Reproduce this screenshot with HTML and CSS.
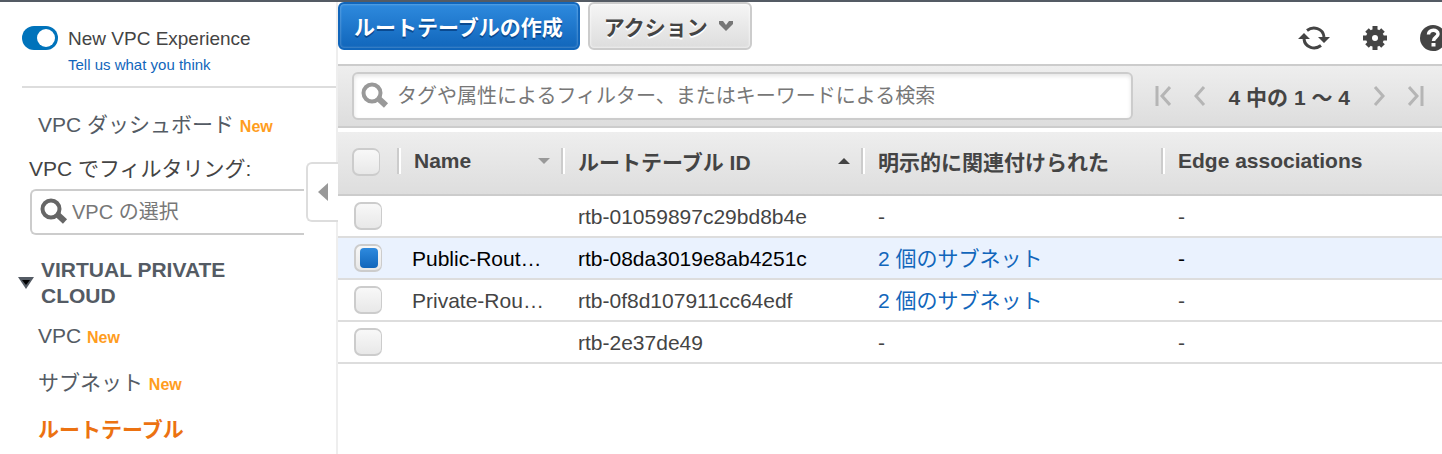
FILE: index.html
```html
<!DOCTYPE html>
<html lang="ja">
<head>
    <meta charset="UTF-8">
    <meta name="viewport" content="width=device-width, initial-scale=1.0">
    <title>ルートテーブル | VPC</title>
    <link rel="stylesheet" href="styles.css">
</head>
<body>
<div class="layout">
    <aside class="sidebar">
        <div class="experience">
            <input type="checkbox" id="newExperience" class="toggle" checked>
            <div class="experience-text">
                <label for="newExperience">New VPC Experience</label>
                <a href="#">Tell us what you think</a>
            </div>
        </div>

        <a href="#" class="nav-item dashboard">VPC ダッシュボード <span class="new">New</span></a>

        <label for="vpcFilter" class="filter-label">VPC でフィルタリング:</label>
        <div class="vpc-filter">
            <svg viewBox="0 0 28 28" width="28" height="28">
                <circle cx="11" cy="11" r="8.5" fill="none" stroke="#666" stroke-width="4"/>
                <path d="M18 17l7 6.5" stroke="#666" stroke-width="6"/>
            </svg>
            <input type="text" id="vpcFilter" placeholder="VPC の選択">
        </div>

        <div class="section">
            <svg viewBox="0 0 16 12" width="16" height="12">
                <path d="M0 0h16L8 12z" fill="#545b64"/>
                <path d="M4 3h8l-4 5z" fill="#000"/>
            </svg>
            <h2>VIRTUAL PRIVATE CLOUD</h2>
        </div>

        <nav>
            <a href="#" class="nav-item">VPC <span class="new">New</span></a>
            <a href="#" class="nav-item">サブネット <span class="new">New</span></a>
            <a href="#" class="nav-item active">ルートテーブル</a>
        </nav>

        <button class="collapse" aria-label="サイドバーを閉じる">
            <svg viewBox="0 0 10 18" width="10" height="18"><path d="M10 0v18L0 9z" fill="#999"/></svg>
        </button>
    </aside>

    <main class="content">
        <div class="actions">
            <button class="btn btn-primary">ルートテーブルの作成</button>
            <button class="btn">アクション
                <svg viewBox="0 0 16 12" width="16" height="12"><path d="M1 1h4l3 4 3-4h4v3l-7 7-7-7z" fill="#777"/></svg>
            </button>
            <div class="tools">
                <button class="tool" aria-label="更新">
                    <svg viewBox="0 0 32 24" width="32" height="28">
                        <g fill="none" stroke="#444" stroke-width="3">
                            <path d="M9 4.5C15 0 25 2 26 11"/>
                            <path d="M23 19.500C17 24 7 22 6 13"/>
                        </g>
                        <path d="M20 11h12l-6 6zM0 13h12L6 7z" fill="#444"/>
                    </svg>
                </button>
                <button class="tool" aria-label="設定">
                    <svg viewBox="0 0 24 24" width="24" height="24">
                        <path d="M12 0v24M0 12h24M4 4l16 16M20 4L4 20" stroke="#444" stroke-width="5"/>
                        <circle cx="12" cy="12" r="9" fill="#444"/>
                        <circle cx="12" cy="12" r="3" fill="#fff"/>
                    </svg>
                </button>
                <button class="tool" aria-label="ヘルプ">
                    <svg viewBox="0 0 26 26" width="26" height="26">
                        <circle cx="13" cy="13" r="13" fill="#444"/>
                        <path d="M8.500 9.500c0-5.500 9.500-5.500 9.500-.5 0 3.500-4.500 3-4.500 7" fill="none" stroke="#fff" stroke-width="3.500"/>
                        <path d="M11.500 18h4v3.500h-4z" fill="#fff"/>
                    </svg>
                </button>
            </div>
        </div>

        <div class="filter-bar">
            <div class="search">
                <svg viewBox="0 0 28 28" width="28" height="28">
                    <circle cx="11" cy="11" r="8.500" fill="none" stroke="#999" stroke-width="4"/>
                    <path d="M18 17l7 6.500" stroke="#999" stroke-width="6"/>
                </svg>
                <input type="text" aria-label="フィルター" placeholder="タグや属性によるフィルター、またはキーワードによる検索">
            </div>
            <div class="pager">
                <button aria-label="最初"><svg viewBox="0 0 16 22" width="16" height="22"><path d="M2 1v20M15 2L7 11l8 9"/></svg></button>
                <button aria-label="前へ"><svg viewBox="0 0 12 22" width="12" height="22"><path d="M10 2L2 11l8 9"/></svg></button>
                <span>4 中の 1 〜 4</span>
                <button aria-label="次へ"><svg viewBox="0 0 12 22" width="12" height="22"><path d="M2 2l8 9-8 9"/></svg></button>
                <button aria-label="最後"><svg viewBox="0 0 16 22" width="16" height="22"><path d="M14 1v20M1 2l8 9-8 9"/></svg></button>
            </div>
        </div>

        <table>
            <colgroup>
                <col class="col-check">
                <col class="col-name">
                <col class="col-id">
                <col class="col-subnet">
                <col>
            </colgroup>
            <thead>
                <tr>
                    <th><input type="checkbox" class="check" aria-label="すべて選択"></th>
                    <th><div class="head">Name <svg viewBox="0 0 12 6" width="12" height="6"><path d="M0 0h12L6 6z" fill="#999"/></svg></div></th>
                    <th><div class="head">ルートテーブル ID <svg viewBox="0 0 12 6" width="12" height="6"><path d="M0 6h12L6 0z" fill="#444"/></svg></div></th>
                    <th><div class="head">明示的に関連付けられた</div></th>
                    <th><div class="head">Edge associations</div></th>
                </tr>
            </thead>
            <tbody>
                <tr>
                    <td><input type="checkbox" class="check" aria-label="rtb-01059897c29bd8b4e"></td>
                    <td></td>
                    <td>rtb-01059897c29bd8b4e</td>
                    <td>-</td>
                    <td>-</td>
                </tr>
                <tr class="selected">
                    <td><input type="checkbox" class="check" aria-label="rtb-08da3019e8ab4251c" checked></td>
                    <td>Public-Rout…</td>
                    <td>rtb-08da3019e8ab4251c</td>
                    <td><a href="#">2 個のサブネット</a></td>
                    <td>-</td>
                </tr>
                <tr>
                    <td><input type="checkbox" class="check" aria-label="rtb-0f8d107911cc64edf"></td>
                    <td>Private-Rou…</td>
                    <td>rtb-0f8d107911cc64edf</td>
                    <td><a href="#">2 個のサブネット</a></td>
                    <td>-</td>
                </tr>
                <tr>
                    <td><input type="checkbox" class="check" aria-label="rtb-2e37de49"></td>
                    <td></td>
                    <td>rtb-2e37de49</td>
                    <td>-</td>
                    <td>-</td>
                </tr>
            </tbody>
        </table>
    </main>
</div>
</body>
</html>
```
FILE: styles.css
```css
* {
    box-sizing: border-box;
}

body {
    margin: 0;
    border-top: 2px solid #545b64;
    background-color: white;
    color: #444;
    font-family: "Liberation Sans", "Noto Sans CJK JP", sans-serif;
    font-size: 21px;
    overflow: hidden;
}

button, input {
    font: inherit;
    color: inherit;
}

button {
    padding: 0;
    border: none;
    background: none;
    cursor: pointer;
}

a {
    color: #1166bb;
    text-decoration: none;
}

svg {
    display: block;
    flex: none;
}

.layout {
    display: flex;
    min-height: calc(100vh - 2px);
}

/* Sidebar */

.sidebar {
    position: relative;
    flex: none;
    width: 338px;
    border-right: 2px solid #eee;
}

.experience {
    display: flex;
    gap: 10px;
    margin-left: 22px;
    padding-top: 24px;
    height: 86px;
    border-bottom: 2px solid #ddd;
}

.experience-text {
    display: flex;
    flex-direction: column;
    font-size: 19px;
    line-height: 26px;
}

.experience-text a {
    font-size: 15px;
}

.toggle {
    appearance: none;
    flex: none;
    width: 36px;
    height: 24px;
    margin: 0;
    padding: 3px;
    border-radius: 12px;
    background-color: #0073bb;
}

.toggle::before {
    content: "";
    display: block;
    width: 18px;
    height: 18px;
    margin-left: 12px;
    border-radius: 50%;
    background-color: white;
}

.nav-item {
    display: block;
    padding-left: 38px;
    color: #545b64;
    line-height: 45px;
}

.nav-item.active {
    color: #ec7211;
    font-weight: bold;
}

.new {
    color: #ff9d1e;
    font-size: 16px;
    font-weight: bold;
}

.dashboard {
    margin-top: 14px;
}

.filter-label {
    display: block;
    padding-left: 29px;
    line-height: 40px;
}

.vpc-filter {
    display: flex;
    align-items: center;
    gap: 4px;
    height: 46px;
    margin: 0 32px 0 30px;
    padding-left: 8px;
    border: 2px solid #ccc;
    border-right: none;
    border-radius: 6px 0 0 6px;
}

.vpc-filter input, .search input {
    flex: 1;
    min-width: 0;
    padding: 0;
    border: none;
    outline: none;
    background: none;
    font-size: 20px;
}

::placeholder {
    color: #777;
    opacity: 1;
}

.section {
    display: flex;
    align-items: center;
    gap: 7px;
    margin: 22px 80px 4px 18px;
    color: #545b64;
}

.section h2 {
    margin: 0;
    font-size: 21px;
    line-height: 26px;
}

.collapse {
    position: absolute;
    top: 160px;
    right: -2px;
    display: flex;
    align-items: center;
    justify-content: center;
    width: 32px;
    height: 60px;
    border: 2px solid #ddd;
    border-right: none;
    border-radius: 6px 0 0 6px;
    background-color: white;
}

/* Toolbar */

.content {
    flex: 1;
    min-width: 0;
}

.actions {
    display: flex;
    gap: 8px;
    height: 62px;
}

.btn {
    display: flex;
    align-items: center;
    gap: 10px;
    height: 48px;
    padding: 0 16px 0 14px;
    border: 2px solid #ccc;
    border-radius: 6px;
    background: linear-gradient(#f5f5f5, #ddd);
    box-shadow: inset 0 0 2px 1px rgba(255, 255, 255, 0.5);
    font-weight: bold;
    text-shadow: 0 2px 0 white;
    white-space: nowrap;
}

.btn-primary {
    padding: 0 15px 0 14px;
    border-color: #1166bb;
    background: linear-gradient(#2e8ade, #1166bb);
    box-shadow: inset 0 0 2px 1px rgba(255, 255, 255, 0.2);
    color: white;
    text-shadow: 0 2px 0 #0a4a90;
}

.tools {
    display: flex;
    align-items: center;
    gap: 33px;
    margin: 10px -4px 0 auto;
}

/* Filter and paging */

.filter-bar {
    display: flex;
    align-items: center;
    gap: 22px;
    height: 64px;
    padding: 0 18px 0 14px;
    border: solid #ccc;
    border-width: 2px 0;
    background: linear-gradient(#eee, #ddd);
}

.search {
    display: flex;
    flex: 1;
    align-items: center;
    gap: 8px;
    height: 48px;
    padding-left: 7px;
    border: 2px solid #ccc;
    border-radius: 6px;
    background-color: white;
    box-shadow: inset 0 2px 4px #e4e4e4;
}

.pager {
    display: flex;
    align-items: center;
    gap: 23px;
    font-weight: bold;
    white-space: nowrap;
}

.pager path {
    fill: none;
    stroke: #b5b5b5;
    stroke-width: 3;
}

/* Route tables */

table {
    width: 100%;
    margin-top: 4px;
    border-collapse: separate;
    border-spacing: 0;
    table-layout: fixed;
}

.col-check {
    width: 59px;
}

.col-name {
    width: 164px;
}

.col-id, .col-subnet {
    width: 300px;
}

th {
    height: 64px;
    padding: 0 0 4px;
    border-bottom: 2px solid #ccc;
    background: linear-gradient(#eee, #ddd) 0 0 / 100% 64px;
    text-align: left;
    white-space: nowrap;
}

th:first-child {
    padding: 0 0 2px 14px;
}

.head {
    display: flex;
    align-items: center;
    justify-content: space-between;
    height: 26px;
    padding: 0 11px 0 15px;
    border-left: 2px solid #ccc;
    box-shadow: inset 2px 0 white;
}

td {
    height: 42px;
    padding: 2px 0 0 17px;
    border-bottom: 2px solid #ddd;
    line-height: 26px;
    white-space: nowrap;
}

td:first-child {
    padding: 0 0 0 16px;
}

td:nth-child(2) {
    padding-left: 15px;
}

.selected {
    background-color: #eaf2fe;
    color: black;
}

.check {
    appearance: none;
    display: block;
    width: 28px;
    height: 28px;
    margin: 0;
    padding: 2px 4px;
    border: 2px solid #ccc;
    border-right-width: 1px;
    border-radius: 7px;
    background: linear-gradient(#f8f8f8, #e8e8e8);
}

.check:checked::before {
    content: "";
    display: block;
    width: 18px;
    height: 20px;
    border-radius: 4px;
    background: linear-gradient(#2e8ade, #1166bb);
}
```
